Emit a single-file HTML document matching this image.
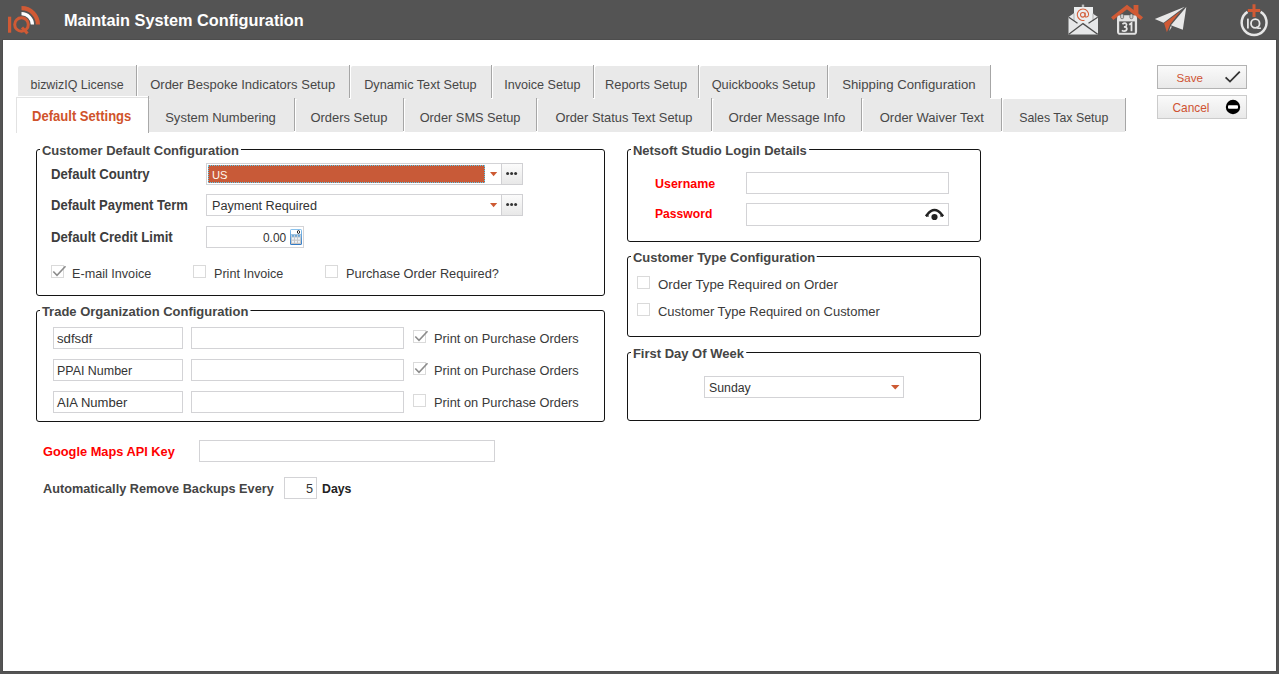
<!DOCTYPE html><html><head><meta charset="utf-8"><style>
*{box-sizing:border-box;margin:0;padding:0}
html,body{width:1279px;height:674px;overflow:hidden;background:#545454;font-family:"Liberation Sans",sans-serif;color:#444}
#client{position:absolute;left:3px;top:40px;width:1273px;height:631px;background:#fff;outline:1px solid #4d4d4d}
.t{position:absolute;white-space:nowrap;line-height:16px}
.tab{position:absolute;background:#e9e9e9}
.sep{position:absolute;width:1px;background:#a6a6a6}
.tt{position:absolute;white-space:nowrap;line-height:16px;font-size:12.7px;color:#474747;text-align:center}
.grp{position:absolute;border:1px solid #141414;border-radius:3px}
.leg{position:absolute;background:#fff;font-weight:bold;font-size:13.65px;line-height:16px;color:#454545;white-space:nowrap;padding:0 2px 0 2px;transform:scaleX(0.9524);transform-origin:0 0}
.tb{position:absolute;border:1px solid #d3d3d6;background:#fff}
.cb{position:absolute;width:13px;height:13px;border:1px solid #dadada;background:#fff}
.lbl{color:#3d3d3d}
.red{color:#ff0000}
</style></head><body>
<div id="client"></div>
<div class="t" style="left:64px;top:10px;font-size:16.3px;font-weight:bold;color:#fff;line-height:20px">Maintain System Configuration</div>
<div class="tab" style="left:18px;top:66px;width:118px;height:33px;border-top-left-radius:2px"></div>
<div class="sep" style="left:136px;top:65px;height:33px"></div>
<div class="tt" style="left:30.50px;top:77px;font-size:12.41px;text-align:left">bizwizIQ License</div>
<div class="tab" style="left:138px;top:66px;width:211px;height:33px;border-top-left-radius:2px"></div>
<div class="sep" style="left:349px;top:65px;height:33px"></div>
<div class="tt" style="left:150.20px;top:77px;font-size:13.01px;text-align:left">Order Bespoke Indicators Setup</div>
<div class="tab" style="left:351px;top:66px;width:140px;height:33px;border-top-left-radius:2px"></div>
<div class="sep" style="left:491px;top:65px;height:33px"></div>
<div class="tt" style="left:364.20px;top:77px;font-size:12.68px;text-align:left">Dynamic Text Setup</div>
<div class="tab" style="left:493px;top:66px;width:100px;height:33px;border-top-left-radius:2px"></div>
<div class="sep" style="left:593px;top:65px;height:33px"></div>
<div class="tt" style="left:504.20px;top:77px;font-size:12.58px;text-align:left">Invoice Setup</div>
<div class="tab" style="left:595px;top:66px;width:103px;height:33px;border-top-left-radius:2px"></div>
<div class="sep" style="left:698px;top:65px;height:33px"></div>
<div class="tt" style="left:604.95px;top:77px;font-size:12.87px;text-align:left">Reports Setup</div>
<div class="tab" style="left:700px;top:66px;width:127px;height:33px;border-top-left-radius:2px"></div>
<div class="sep" style="left:827px;top:65px;height:33px"></div>
<div class="tt" style="left:711.70px;top:77px;font-size:12.78px;text-align:left">Quickbooks Setup</div>
<div class="tab" style="left:829px;top:66px;width:161px;height:33px;border-top-left-radius:2px"></div>
<div class="sep" style="left:990px;top:65px;height:33px"></div>
<div class="tt" style="left:842.20px;top:77px;font-size:13.2px;text-align:left">Shipping Configuration</div>
<div class="tab" style="left:149px;top:99px;width:145px;height:33px;border-top-left-radius:2px"></div>
<div class="sep" style="left:294px;top:98px;height:33px"></div>
<div class="tt" style="left:165.20px;top:110px;font-size:13.03px;text-align:left">System Numbering</div>
<div class="tab" style="left:296px;top:99px;width:107px;height:33px;border-top-left-radius:2px"></div>
<div class="sep" style="left:403px;top:98px;height:33px"></div>
<div class="tt" style="left:310.45px;top:110px;font-size:12.95px;text-align:left">Orders Setup</div>
<div class="tab" style="left:405px;top:99px;width:131px;height:33px;border-top-left-radius:2px"></div>
<div class="sep" style="left:536px;top:98px;height:33px"></div>
<div class="tt" style="left:419.70px;top:110px;font-size:12.77px;text-align:left">Order SMS Setup</div>
<div class="tab" style="left:538px;top:99px;width:173px;height:33px;border-top-left-radius:2px"></div>
<div class="sep" style="left:711px;top:98px;height:33px"></div>
<div class="tt" style="left:555.45px;top:110px;font-size:12.86px;text-align:left">Order Status Text Setup</div>
<div class="tab" style="left:713px;top:99px;width:148px;height:33px;border-top-left-radius:2px"></div>
<div class="sep" style="left:861px;top:98px;height:33px"></div>
<div class="tt" style="left:728.45px;top:110px;font-size:13.24px;text-align:left">Order Message Info</div>
<div class="tab" style="left:863px;top:99px;width:138px;height:33px;border-top-left-radius:2px"></div>
<div class="sep" style="left:1001px;top:98px;height:33px"></div>
<div class="tt" style="left:879.70px;top:110px;font-size:13.03px;text-align:left">Order Waiver Text</div>
<div class="tab" style="left:1003px;top:99px;width:122px;height:33px;border-top-left-radius:2px"></div>
<div class="sep" style="left:1125px;top:98px;height:33px"></div>
<div class="tt" style="left:1019.20px;top:110px;font-size:12.37px;text-align:left">Sales Tax Setup</div>
<div style="position:absolute;left:15px;top:96px;width:134px;height:38px;background:#fff"></div>
<div style="position:absolute;left:16px;top:97px;width:133px;height:36px;border:1px solid #e2e2e2;border-bottom:none;background:#fff"></div>
<div style="position:absolute;left:148px;top:96px;width:1px;height:37px;background:#a9a9a9"></div>
<div class="t" style="left:31.6px;top:109px;font-size:13.71px;font-weight:bold;color:#d0532b;transform:scaleX(0.9524);transform-origin:0 0">Default Settings</div>
<div style="position:absolute;border:1px solid #b3b3b3;background:linear-gradient(#fafafa,#e9e9e9);left:1157px;top:65px;width:90px;height:24px"></div>
<div style="position:absolute;border:1px solid #b3b3b3;background:linear-gradient(#fafafa,#e9e9e9);left:1157px;top:95px;width:90px;height:24px;border-color:#cbcbcb"></div>
<div class="t" style="left:1176.5px;top:70px;font-size:11.6px;color:#cf5232;">Save</div>
<div class="t" style="left:1172.5px;top:100px;font-size:11.9px;color:#cf5232;">Cancel</div>
<svg style="position:absolute;left:1223px;top:69px" width="20" height="16" viewBox="0 0 20 16"><path d="M2.6 8.3 L7 12.6 L16.8 2.6" fill="none" stroke="#333" stroke-width="1.8"/></svg>
<svg style="position:absolute;left:1224px;top:99px" width="18" height="17" viewBox="0 0 18 17"><circle cx="9" cy="8" r="7.2" fill="#000"/><rect x="4" y="6.3" width="10" height="3.4" rx="1" fill="#fff"/></svg>
<div class="grp" style="left:36px;top:149px;width:569px;height:147px"></div>
<div class="leg" style="left:40px;top:143px">Customer Default Configuration</div>
<div class="t" style="left:51px;top:166px;font-size:13.81px;font-weight:bold;transform:scaleX(0.9524);transform-origin:0 0;color:#3d3d3d;">Default Country</div>
<div class="t" style="left:51px;top:198px;font-size:13.72px;font-weight:bold;transform:scaleX(0.9524);transform-origin:0 0;color:#3d3d3d;">Default Payment Term</div>
<div class="t" style="left:51px;top:229px;font-size:13.86px;font-weight:bold;transform:scaleX(0.9524);transform-origin:0 0;color:#3d3d3d;">Default Credit Limit</div>
<div class="tb" style="left:206px;top:163px;width:296px;height:22px"></div>
<div style="position:absolute;left:208px;top:165px;width:277px;height:18px;background:#c85a38;outline:1px dotted #5ec8ea;outline-offset:-1px"></div>
<div class="t" style="left:212px;top:167px;font-size:11.2px;color:#fff8ee;">US</div>
<svg style="position:absolute;left:490px;top:172px" width="8" height="5" viewBox="0 0 8 5"><path d="M0 0 H7.2 L3.6 4.2Z" fill="#cd5a33"/></svg>
<div style="position:absolute;left:501px;top:163px;width:22px;height:22px;border:1px solid #d0d0d3;background:linear-gradient(#fbfbfb,#e8e8e8)"></div>
<svg style="position:absolute;left:504px;top:171px" width="16" height="6" viewBox="0 0 16 6"><circle cx="3.6" cy="2.4" r="1.5" fill="#333"/><circle cx="7.6" cy="2.4" r="1.5" fill="#333"/><circle cx="11.6" cy="2.4" r="1.5" fill="#333"/></svg>
<div class="tb" style="left:206px;top:194px;width:296px;height:22px"></div>
<div class="t" style="left:212px;top:198px;font-size:12.68px;color:#333;">Payment Required</div>
<svg style="position:absolute;left:490px;top:203px" width="8" height="5" viewBox="0 0 8 5"><path d="M0 0 H7.2 L3.6 4.2Z" fill="#cd5a33"/></svg>
<div style="position:absolute;left:501px;top:194px;width:22px;height:22px;border:1px solid #d0d0d3;background:linear-gradient(#fbfbfb,#e8e8e8)"></div>
<svg style="position:absolute;left:504px;top:202px" width="16" height="6" viewBox="0 0 16 6"><circle cx="3.6" cy="2.4" r="1.5" fill="#333"/><circle cx="7.6" cy="2.4" r="1.5" fill="#333"/><circle cx="11.6" cy="2.4" r="1.5" fill="#333"/></svg>
<div class="tb" style="left:206px;top:226px;width:98px;height:22px"></div>
<div class="t" style="left:263px;top:230px;font-size:11.92px;color:#333;">0.00</div>
<svg style="position:absolute;left:288px;top:227px" width="16" height="20" viewBox="288 227 16 20">
<defs><linearGradient id="cg" x1="0" y1="0" x2="0" y2="1"><stop offset="0" stop-color="#8cc4ee"/><stop offset="1" stop-color="#2f78c4"/></linearGradient>
<linearGradient id="kg" x1="0" y1="0" x2="0" y2="1"><stop offset="0" stop-color="#c4d0da"/><stop offset="1" stop-color="#c9c3bf"/></linearGradient></defs>
<rect x="290" y="229" width="12" height="16" rx="1.6" fill="url(#cg)"/>
<rect x="291" y="230" width="10" height="4.2" fill="#fff"/>
<rect x="291" y="234.6" width="10" height="9.4" fill="url(#kg)"/>
<rect x="292" y="235.2" width="2" height="1.4" fill="#5d9fd8"/><rect x="295" y="235.2" width="2" height="1.4" fill="#5d9fd8"/><rect x="298" y="235.2" width="2" height="1.4" fill="#5d9fd8"/>
<rect x="292" y="237.6" width="2" height="2" fill="#eef3f8"/><rect x="295" y="237.6" width="2" height="2" fill="#eef3f8"/><rect x="298" y="237.6" width="2" height="2" fill="#eef3f8"/>
<rect x="292" y="240.8" width="2" height="2" fill="#eef3f8"/><rect x="295" y="240.8" width="2" height="2" fill="#eef3f8"/><rect x="298" y="240.8" width="2" height="2" fill="#eef3f8"/>
<ellipse cx="298.5" cy="232" rx="1.1" ry="1.5" fill="none" stroke="#111" stroke-width="0.9"/>
</svg>
<div class="cb" style="left:51px;top:265px"></div>
<svg style="position:absolute;left:51px;top:265px" width="16" height="15" viewBox="0 0 16 15"><path d="M2.3 6.5 L6 10.3 L14.5 1.3" fill="none" stroke="#8c8c8c" stroke-width="1.6"/></svg>
<div class="t" style="left:72px;top:266px;font-size:12.63px;color:#3a3a3a;">E-mail Invoice</div>
<div class="cb" style="left:193px;top:265px"></div>
<div class="t" style="left:214px;top:266px;font-size:12.6px;color:#3a3a3a;">Print Invoice</div>
<div class="cb" style="left:325px;top:265px"></div>
<div class="t" style="left:346px;top:266px;font-size:12.8px;color:#3a3a3a;">Purchase Order Required?</div>
<div class="grp" style="left:36px;top:310px;width:569px;height:112px"></div>
<div class="leg" style="left:40px;top:304px">Trade Organization Configuration</div>
<div class="tb" style="left:53px;top:327px;width:130px;height:22px"></div>
<div class="tb" style="left:191px;top:327px;width:213px;height:22px"></div>
<div class="t" style="left:57px;top:331px;font-size:13.2px;color:#333;">sdfsdf</div>
<div class="cb" style="left:413px;top:330px"></div>
<svg style="position:absolute;left:413px;top:330px" width="16" height="15" viewBox="0 0 16 15"><path d="M2.3 6.5 L6 10.3 L14.5 1.3" fill="none" stroke="#8c8c8c" stroke-width="1.6"/></svg>
<div class="t" style="left:434px;top:331px;font-size:12.83px;color:#3a3a3a;">Print on Purchase Orders</div>
<div class="tb" style="left:53px;top:359px;width:130px;height:22px"></div>
<div class="tb" style="left:191px;top:359px;width:213px;height:22px"></div>
<div class="t" style="left:57px;top:363px;font-size:12.45px;color:#333;">PPAI Number</div>
<div class="cb" style="left:413px;top:362px"></div>
<svg style="position:absolute;left:413px;top:362px" width="16" height="15" viewBox="0 0 16 15"><path d="M2.3 6.5 L6 10.3 L14.5 1.3" fill="none" stroke="#8c8c8c" stroke-width="1.6"/></svg>
<div class="t" style="left:434px;top:363px;font-size:12.83px;color:#3a3a3a;">Print on Purchase Orders</div>
<div class="tb" style="left:53px;top:391px;width:130px;height:22px"></div>
<div class="tb" style="left:191px;top:391px;width:213px;height:22px"></div>
<div class="t" style="left:57px;top:395px;font-size:13.05px;color:#333;">AIA Number</div>
<div class="cb" style="left:413px;top:394px"></div>
<div class="t" style="left:434px;top:395px;font-size:12.83px;color:#3a3a3a;">Print on Purchase Orders</div>
<div class="t" style="left:43px;top:444px;font-size:13.44px;font-weight:bold;transform:scaleX(0.9524);transform-origin:0 0;color:#ff0000;">Google Maps API Key</div>
<div class="tb" style="left:199px;top:440px;width:296px;height:22px"></div>
<div class="t" style="left:43px;top:481px;font-size:13.33px;font-weight:bold;transform:scaleX(0.9524);transform-origin:0 0;color:#444;">Automatically Remove Backups Every</div>
<div class="tb" style="left:284px;top:477px;width:33px;height:22px"></div>
<div class="t" style="left:306px;top:481px;font-size:12.7px;color:#333;">5</div>
<div class="t" style="left:322px;top:481px;font-size:12.92px;font-weight:bold;transform:scaleX(0.9524);transform-origin:0 0;color:#222;">Days</div>
<div class="grp" style="left:627px;top:149px;width:354px;height:93px"></div>
<div class="leg" style="left:631px;top:143px">Netsoft Studio Login Details</div>
<div class="t" style="left:655px;top:176px;font-size:13.07px;font-weight:bold;transform:scaleX(0.9524);transform-origin:0 0;color:#ff0000;">Username</div>
<div class="t" style="left:655px;top:206px;font-size:12.76px;font-weight:bold;transform:scaleX(0.9524);transform-origin:0 0;color:#ff0000;">Password</div>
<div class="tb" style="left:746px;top:172px;width:203px;height:22px"></div>
<div class="tb" style="left:746px;top:203px;width:203px;height:23px"></div>
<svg style="position:absolute;left:920px;top:204px" width="28" height="20" viewBox="920 204 28 20"><path d="M925.9 216.3 L927.3 214.6 Q930.8 210 934.5 210 Q938.2 210 941.7 214.6 L943.1 216.3" fill="none" stroke="#222" stroke-width="2.5"/><path d="M926 216 H929 M940 216 H943" stroke="#222" stroke-width="1.2"/><circle cx="934.5" cy="217" r="3.1" fill="#222"/></svg>
<div class="grp" style="left:627px;top:256px;width:354px;height:81px"></div>
<div class="leg" style="left:631px;top:250px">Customer Type Configuration</div>
<div class="cb" style="left:637px;top:276px"></div>
<div class="t" style="left:658px;top:277px;font-size:13.29px;color:#3a3a3a;">Order Type Required on Order</div>
<div class="cb" style="left:637px;top:303px"></div>
<div class="t" style="left:658px;top:304px;font-size:12.98px;color:#3a3a3a;">Customer Type Required on Customer</div>
<div class="grp" style="left:627px;top:352px;width:354px;height:69px"></div>
<div class="leg" style="left:631px;top:346px">First Day Of Week</div>
<div class="tb" style="left:704px;top:376px;width:200px;height:22px"></div>
<div class="t" style="left:709px;top:380px;font-size:12.3px;color:#333;">Sunday</div>
<svg style="position:absolute;left:891px;top:385px" width="9" height="5" viewBox="0 0 9 5"><path d="M0 0 H8.5 L4.25 4.5Z" fill="#cd5a33"/></svg>
<svg style="position:absolute;left:0;top:0" width="60" height="40" viewBox="0 0 60 40">
<rect x="8" y="16.7" width="3.2" height="16" fill="#d05a35"/>
<circle cx="21.5" cy="24.5" r="6.8" fill="none" stroke="#d05a35" stroke-width="3"/>
<path d="M22 27.5 L27.5 33.5" stroke="#d05a35" stroke-width="3"/>
<path d="M21.5 8.1 A16.4 16.4 0 0 1 37.9 24.5" fill="none" stroke="#d05a35" stroke-width="4.2"/>
<path d="M21.5 13.6 A10.9 10.9 0 0 1 32.4 24.5" fill="none" stroke="#fff" stroke-width="3.3"/>
</svg>
<svg style="position:absolute;left:1060px;top:0" width="140" height="40" viewBox="1060 0 140 40">
<!-- envelope -->
<path d="M1068.5 17 L1073.5 13.5 L1092.5 13.5 L1098 17 L1098 34.6 L1068.5 34.6 Z" fill="#e6e7e8"/>
<rect x="1081.8" y="4.6" width="2.4" height="3" fill="#bdbdbd"/>
<rect x="1074" y="7" width="19" height="16" fill="#ebedee"/>
<path d="M1074 13.5 V21 M1093 13.5 V21" stroke="#b0b0b0" stroke-width="1"/>
<path d="M1088.6 15.6 A5.7 5.7 0 1 0 1084.5 20.2" fill="none" stroke="#d4603c" stroke-width="1.05"/>
<circle cx="1082.8" cy="14.8" r="2.3" fill="none" stroke="#d4603c" stroke-width="1.05"/>
<path d="M1085.1 12.6 V16.2 Q1085.6 18.3 1088.6 15.6" fill="none" stroke="#d4603c" stroke-width="1.05"/>
<path d="M1068.8 17.3 L1077.5 23.2 M1097.7 17.3 L1088.5 23.2" stroke="#4d4d4d" stroke-width="1.3"/>
<path d="M1068.8 34.3 L1083 23.6 L1097.7 34.3" fill="none" stroke="#4d4d4d" stroke-width="1.3"/>
<!-- calendar house -->
<path d="M1112.2 18.7 L1127 7 L1141.9 18.7" fill="none" stroke="#d05a35" stroke-width="3.6"/>
<path d="M1133.6 5 H1138.4 V14.8 L1133.6 11 Z" fill="#d05a35"/>
<rect x="1117" y="15.3" width="20.1" height="19.5" rx="3.4" fill="#e2e2e2"/>
<rect x="1119.2" y="21.4" width="15.6" height="11.4" fill="#545454"/>
<rect x="1120.6" y="13.9" width="3" height="4.8" rx="1.3" fill="#cfcfcf" stroke="#5a5a5a" stroke-width="0.7"/>
<rect x="1129.9" y="13.9" width="3" height="4.8" rx="1.3" fill="#cfcfcf" stroke="#5a5a5a" stroke-width="0.7"/>
<path d="M1122.4 24.1 Q1124.2 22.7 1125.8 23.4 Q1127.1 24.3 1126.3 25.9 Q1125.6 26.9 1123.9 26.9 Q1126.9 27 1126.9 28.9 Q1126.6 31.1 1124.2 31.1 Q1122.8 31.1 1121.9 30.3" fill="none" stroke="#e6e6e6" stroke-width="1.7"/>
<path d="M1129.2 24.8 L1131.5 23.1 V31.3" fill="none" stroke="#e6e6e6" stroke-width="1.8"/>
<!-- paper plane -->
<path d="M1154.8 18.9 L1184.8 6.8 L1163.6 22.7 Z" fill="#e8e8e8"/>
<path d="M1164.1 23.2 L1180.8 11.1 L1170.2 24.2 L1166.9 32.3 Z" fill="#d05a35"/>
<path d="M1186.3 7 L1182.8 29.7 L1170.9 25.3 Z" fill="#e8e8e8"/>
<path d="M1169.3 31 L1172 26.6 L1170.3 26.4 Z" fill="#dcdcdc"/>
</svg>
<svg style="position:absolute;left:1236px;top:0" width="40" height="40" viewBox="1236 0 40 40">
<path d="M1247.6 11.9 A12.45 12.45 0 1 0 1260.6 11.9" fill="none" stroke="#e6e6e6" stroke-width="2.5"/>
<path d="M1247.8 10.4 H1260.2 M1254 4.2 V16.9" stroke="#d05a35" stroke-width="3"/>
<rect x="1247" y="18.6" width="1.8" height="9.9" fill="#e6e6e6"/>
<ellipse cx="1255.3" cy="23.5" rx="4.3" ry="4.3" fill="none" stroke="#e6e6e6" stroke-width="1.8"/>
<path d="M1256.3 26.8 L1258 28.3 H1260.9" fill="none" stroke="#e6e6e6" stroke-width="1.6"/>
</svg>

</body></html>
